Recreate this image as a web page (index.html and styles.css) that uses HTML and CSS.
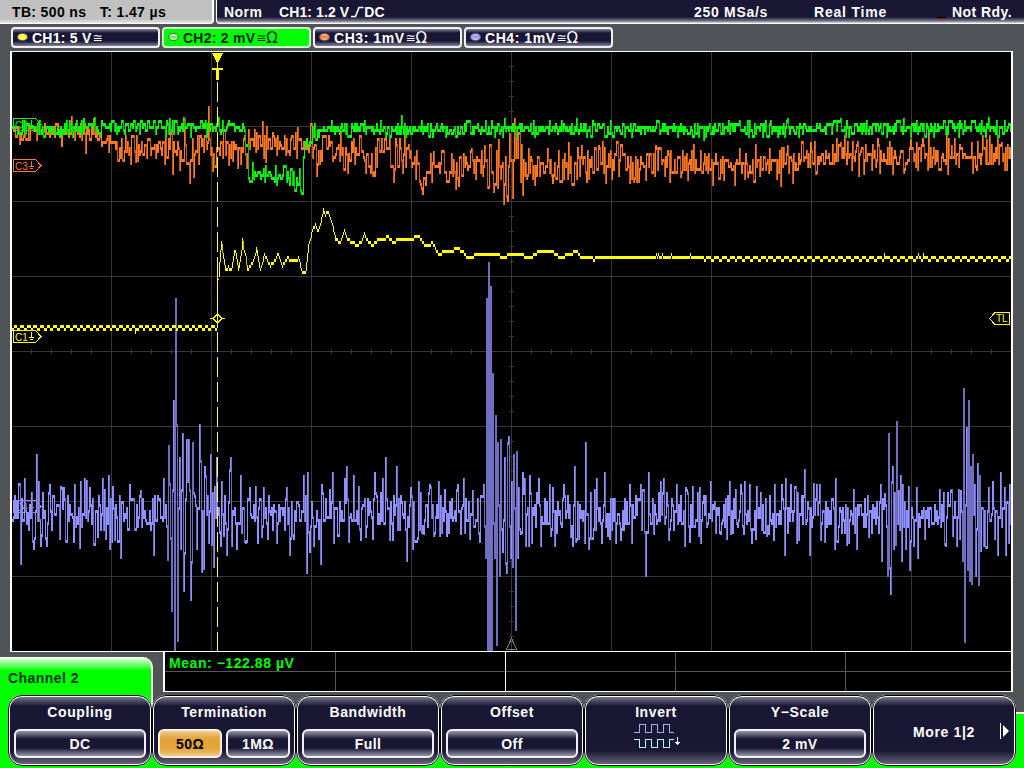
FILE: index.html
```
<!DOCTYPE html>
<html lang="en">
<head>
    <meta charset="utf-8">
    <title>Oscilloscope</title>
    <link rel="stylesheet" href="styles.css">
</head>
<body>
    <header class="topbar">
        <div class="timebase"><span class="tb">TB: 500 ns</span><span class="tpos">T: 1.47 µs</span></div>
        <div class="status">
            <span class="mode">Norm</span>
            <span class="trig">CH1: 1.2 V<svg class="edge" width="13" height="12" viewBox="0 0 13 12"><path d="M0 10.5H4.5L8 1.5H12.5"/></svg>DC</span>
            <span class="rate">250 MSa/s</span>
            <span class="acq">Real Time</span>
            <i class="lamp"></i>
            <span class="ready">Not Rdy.</span>
        </div>
    </header>

    <nav class="channels">
        <div class="channel ch1"><i class="led"></i><span class="name">CH1: 5 V</span><span class="sym">≅</span></div>
        <div class="channel ch2 active"><i class="led"></i><span class="name">CH2: 2 mV</span><span class="sym">≅</span><span class="sym ohm">Ω</span></div>
        <div class="channel ch3"><i class="led"></i><span class="name wide">CH3: 1mV</span><span class="sym">≅</span><span class="sym ohm">Ω</span></div>
        <div class="channel ch4"><i class="led"></i><span class="name wide">CH4: 1mV</span><span class="sym">≅</span><span class="sym ohm">Ω</span></div>
    </nav>

    <main class="scope">
        <svg width="999" height="599" viewBox="12 52 999 599" shape-rendering="crispEdges">
            <path id="grid" class="grid"/>
            <g class="label c4"><path d="M13.5 500.5H35.5L41 506.5L35.5 512.5H13.5Z"/><text x="15" y="510.5">C4</text><path d="M31.5 502V507M29 507.5H34M30 510.5H33"/></g>
            <g class="label c2"><path d="M13.5 118.5H35.5L41 124.5L35.5 130.5H13.5Z"/><text x="15" y="128.5">C2</text><path d="M31.5 120V125M29 125.5H34M30 128.5H33"/></g>
            <g class="label c3"><path d="M13.5 159.5H35.5L41 165.5L35.5 171.5H13.5Z"/><text x="15" y="169.5">C3</text><path d="M31.5 161V166M29 166.5H34M30 168.5H33"/></g>
            <g class="label c1"><path d="M13.5 330.5H35.5L41 336.5L35.5 342.5H13.5Z"/><text x="15" y="340.5">C1</text><path d="M31.5 332V337M29 337.5H34M30 339.5H33"/></g>
            <path id="ch4" class="wave w4"/><path id="ch4dim" class="wave w4 dim"/>
            <path id="ch1" class="wave w1"/><path id="ch1dim" class="wave w1 dim"/>
            <path id="ch3" class="wave w3"/><path id="ch3dim" class="wave w3 dim"/>
            <path id="ch2" class="wave w2"/><path id="ch2dim" class="wave w2 dim"/>
            <!-- trigger position and level -->
            <path class="trigline" d="M217.5 82V651"/>
            <path class="trigfill" d="M212 53H223L218 63V68H223V70H219V80H216V70H212V68H217V63Z"/>
            <path class="trigmark" d="M210 318.5H213L217.5 314L222 318.5L217.5 323L213 318.5M222 318.5H225"/>
            <g class="label c1"><path d="M989.5 318.5L995 312.5H1009.5V324.5H995Z"/><text x="996" y="322">TL</text></g>
            <path class="ref" d="M511.5 638L506.5 649.5H516.5Z"/>
        </svg>
    </main>

    <section class="bottom">
        <div class="tab">Channel 2</div>
        <div class="measure">
            <div class="cell first">Mean: −122.88 µV</div><div class="cell mid"></div><div class="cell"></div><div class="cell"></div><div class="cell last"></div>
            <div class="cell low"></div><div class="cell low mid"></div><div class="cell low"></div><div class="cell low"></div><div class="cell low last"></div>
        </div>
    </section>

    <footer class="softkeys">
        <div class="key"><h2>Coupling</h2><div class="row"><b>DC</b></div></div>
        <div class="key"><h2>Termination</h2><div class="row"><b class="on">50Ω</b><b>1MΩ</b></div></div>
        <div class="key"><h2>Bandwidth</h2><div class="row"><b>Full</b></div></div>
        <div class="key"><h2>Offset</h2><div class="row"><b>Off</b></div></div>
        <div class="key"><h2>Invert</h2>
            <svg class="invert" width="48" height="26" viewBox="0 0 48 26" shape-rendering="crispEdges">
                <path class="in" d="M2 9.5H7.5V1.5H13.5V9.5H19.5V1.5H25.5V9.5H31.5V1.5H37.5V9.5H42"/>
                <path class="out" d="M2 16.5H7.5V24.5H13.5V16.5H19.5V24.5H25.5V16.5H31.5V24.5H37.5V16.5H42"/>
                <path class="arrow" d="M45.5 14V22M43 19.5H48M44 20.5H47"/>
            </svg>
        </div>
        <div class="key"><h2>Y−Scale</h2><div class="row"><b>2 mV</b></div></div>
        <div class="key more"><span>More 1|2</span><svg width="9" height="16" viewBox="0 0 9 16"><path d="M0 0H1V16H0ZM3 2L9 8L3 14Z"/></svg></div>
    </footer>
    <script src="traces.js"></script>
</body>
</html>
```

FILE: styles.css
```
* {
    box-sizing: border-box;
}
body {
    margin: 0;
    width: 1024px;
    height: 768px;
    overflow: hidden;
    background: #515457;
    color: #fff;
    font: bold 14px/16px "Liberation Sans", Arial, sans-serif;
    letter-spacing: 0.45px;
    white-space: nowrap;
}

/* top bar */
.topbar {
    display: flex;
    gap: 2px;
    height: 24px;
}
.timebase {
    width: 214px;
    height: 24px;
    padding: 4px 0 0 12px;
    display: flex;
    color: #000;
    background: linear-gradient(#c0c0c0 19px, #e8e8e8);
    border-bottom: 1px solid #fff;
    border-right: 2px solid #fff;
    border-bottom-right-radius: 4px;
}
.tb {
    width: 88px;
}
.timebase span {
    letter-spacing: 0.35px;
}
.status {
    flex: 1;
    display: flex;
    padding-top: 4px;
    background: linear-gradient(#1a1735 17px, #77748a 21px, #e0e0e8 23px);
    border-left: 1px solid #fff;
    border-bottom: 1px solid #fff;
    border-bottom-left-radius: 4px;
}
.mode {
    width: 55px;
    margin-left: 7px;
}
.trig {
    width: 415px;
    letter-spacing: 0.1px;
}
.edge {
    margin: 0 0 -1px 2px;
    fill: none;
    stroke: #fff;
    stroke-width: 1.6;
}
.rate {
    width: 120px;
    letter-spacing: 0.7px;
}
.acq {
    width: 123px;
    letter-spacing: 0.8px;
}
.lamp {
    width: 9px;
    height: 2px;
    margin: 13px 6px 0 0;
    background: #b00000;
    border-top: 1px solid #000;
}

/* channel tabs */
.channels {
    display: flex;
    gap: 2px;
    padding: 3px 0 0 11px;
    height: 27px;
}
.channel {
    width: 149px;
    height: 21px;
    padding-left: 4px;
    display: flex;
    align-items: center;
    border: 2px solid #f0f0f4;
    border-radius: 4px;
    background: linear-gradient(#85839a, #1a1735 4px, #1a1735 12px, #85839a);
}
.channel.active {
    color: #002000;
    background: #00ff00;
    border-color: #d0ffd0;
}
.led {
    width: 11px;
    height: 8px;
    margin: -1px 4px 0 0;
    border: 1px solid #666;
    border-radius: 50%;
}
.ch1 .led { background: linear-gradient(#ffffa0, #ffff00 50%, #ffffa0); }
.ch2 .led { background: linear-gradient(#e0ffe0, #60e060 50%, #d0ffd0); }
.ch3 .led { background: linear-gradient(#ffc8a0, #ff7820 50%, #ffc8a0); }
.ch4 .led { background: linear-gradient(#c8c8ff, #9090ff 50%, #d0d0ff); }
.name {
    letter-spacing: 0.25px;
}
.name.wide {
    letter-spacing: 0.55px;
}
.sym {
    font: 12px/14px "DejaVu Sans", sans-serif;
    letter-spacing: 0;
    margin-left: 1px;
}
.sym.ohm {
    font-size: 15px;
    margin-left: 0;
}

/* graticule */
.scope {
    width: 1003px;
    height: 601px;
    margin-left: 10px;
    background: #000;
    border: solid #fff;
    border-width: 1px 2px;
}
.scope svg {
    display: block;
}
.grid {
    fill: #383838;
}
.label path {
    fill: none;
    stroke: currentColor;
}
.label text {
    font: 10px "Liberation Sans", sans-serif;
    letter-spacing: 0;
    fill: currentColor;
}
.c1 { color: #ffff00; }
.c2 { color: #00ff00; }
.c3 { color: #ff7820; }
.c4 { color: #8f8fff; }
.w1 { fill: #ffff00; }
.w2 { fill: #00ff00; }
.w3 { fill: #ff7820; }
.w4 { fill: #9090ff; }
.w1.dim { fill: #c4c400; }
.w2.dim { fill: #00c800; }
.w3.dim { fill: #c05a18; }
.w4.dim { fill: #706ec0; }
.trigline {
    stroke: #ffff3c;
    stroke-dasharray: 20 5;
}
.trigfill {
    fill: #ffff00;
}
.trigmark {
    fill: none;
    stroke: #ffff00;
}
.ref {
    fill: none;
    stroke: #808080;
}

/* measurement strip */
.bottom {
    display: flex;
    height: 43px;
}
.tab {
    width: 153px;
    height: 111px;
    margin-top: 5px;
    padding: 13px 0 0 8px;
    flex: none;
    color: #003000;
    background: linear-gradient(#fff, #b0ffb0 4px, #00ff00 14px);
    border-right: 2px solid #e8ffe8;
    border-top-right-radius: 10px;
}
.measure {
    width: 850px;
    height: 40px;
    margin-left: 10px;
    display: grid;
    grid-template-columns: 171px 170px 170px 170px 1fr;
    grid-template-rows: 20px 19px;
    background: #000;
    border: solid #fff;
    border-width: 0 2px 1px;
    color: #00ff00;
    letter-spacing: 0.55px;
}
.cell {
    border-right: 1px solid #555;
    border-bottom: 1px solid #555;
}
.cell.first {
    padding: 3px 0 0 4px;
}
.cell.mid {
    border-right-color: #555;
}
.cell.mid:nth-child(5n + 2) {
    border-right-color: #fff;
}
.cell.last {
    border-right: 0;
}
.cell.low {
    border-bottom: 0;
}

/* soft keys */
.softkeys {
    position: relative;
    display: flex;
    height: 73px;
    padding-left: 8px;
    background: linear-gradient(90deg, #00ff00 8px, transparent 8px, transparent 1015px, #00ff00 1015px) 0 18px no-repeat, linear-gradient(#00ff00, #00ff00) 0 60px no-repeat;
}
.softkeys::after {
    content: "";
    width: 8px;
    height: 2px;
    margin-top: 17px;
    background: #fff;
}
.key {
    width: 144px;
    height: 71px;
    flex: none;
    display: flex;
    flex-direction: column;
    align-items: center;
    border: 2px solid #fff;
    outline: 1px solid #000;
    outline-offset: -1px;
    border-radius: 14px;
    background: linear-gradient(#77758a, #1a1735 9px, #1a1735 54px, #66647a);
}
.key h2 {
    margin: 7px 0 9px;
    font: inherit;
    letter-spacing: 0.6px;
}
.row {
    display: flex;
    gap: 4px;
    width: 132px;
}
.row b {
    flex: 1;
    height: 29px;
    padding-top: 5px;
    text-align: center;
    border: 2px solid #f0f0f4;
    border-radius: 6px;
    background: linear-gradient(#9896a8, #1a1735 8px, #1a1735 17px, #9896a8);
}
.row b.on {
    color: #000;
    border-color: #fff0e0;
    background: linear-gradient(#f0cc90, #e5a53b 7px, #e5a53b 18px, #f0cc90);
}
.invert {
    margin-top: -6px;
    fill: none;
}
.invert .in { stroke: #9cb4e8; }
.invert .out { stroke: #b4f4ff; }
.invert .arrow { stroke: #fff; }
.key.more {
    flex-direction: row;
    justify-content: flex-end;
    padding-right: 5px;
}
.more span {
    margin: 2px 25px 0 0;
    letter-spacing: 0.65px;
}
.more svg {
    fill: #fff;
}
```

FILE: traces.js
```
const LEFT = 12, RIGHT = 1011;

let seed = 4711;
function rnd() {
    seed = (seed * 1103515245 + 12345) & 0x7fffffff;
    return (seed >> 8) / 0x7fffff;
}

// linear interpolation in a list of x,y,x,y...
function curve(p, x) {
    for (let i = 2; i < p.length; i += 2) {
        if (x <= p[i]) {
            const t = (x - p[i - 2]) / (p[i] - p[i - 2]);
            return p[i - 1] + t * (p[i + 1] - p[i - 1]);
        }
    }
    return p[p.length - 1];
}

// one bar per column, from the previous sample to this one
function plot(id, y, limit, thin) {
    let bright = '', dim = '';
    for (let x = LEFT; x < RIGHT; x++) {
        const a = y[x - 1] === undefined ? y[x] : y[x - 1];
        let top = Math.min(a, y[x]), h = Math.abs(a - y[x]) + 3;
        if (thin && h > 3) {
            h -= 3;
            if (y[x] > a) top += 3;
        }
        const bar = `M${x} ${top}h1v${h}h-1z`;
        if (h > 110 || (h > limit && y[x] > a)) dim += bar;
        else bright += bar;
    }
    document.getElementById(id).setAttribute('d', bright);
    document.getElementById(id + 'dim').setAttribute('d', dim);
}

// hold = chance that a column repeats the last sample
function noisy(center, amp, hold, spikes) {
    const y = [];
    let side = 1;
    for (let x = LEFT; x < RIGHT; x++) {
        if (x > LEFT && rnd() < hold) {
            y[x] = y[x - 1];
            continue;
        }
        const c = curve(center, x), a = curve(amp, x);
        if (rnd() < 0.8) side = -side;
        y[x] = Math.round((c + side * Math.abs(rnd() + rnd() - 1) * a) / 3) * 3;
    }
    for (let i = 0; i < spikes.length; i += 2) {
        // bars are 3px high, so downward spikes stop short
        const c = curve(center, spikes[i]);
        y[spikes[i]] = spikes[i + 1] > c ? spikes[i + 1] - 3 : spikes[i + 1];
    }
    return y;
}

// graticule
let g = '';
for (let x = 111; x < 1000; x += 100) g += `M${x} 52h1v599h-1z`;
for (let y = 126; y < 600; y += 75) g += `M12 ${y}h999v1h-999z`;
for (let x = 31; x < 1011; x += 20) g += `M${x} 349h1v5h-1z`;
for (let y = 66; y < 650; y += 15) g += `M509 ${y}h5v1h-5z`;
document.getElementById('grid').setAttribute('d', g);

// CH1
const step = [218,278,219,262,221,240,222,250,225,269,228,266,231,268,234,250,235,249,238,269,
    241,250,242,237,243,246,245,252,247,269,252,262,254,256,256,247,260,269,264,252,267,260,
    270,264,274,260,278,252,282,265,287,257,295,259,298,257,302,270,305,272,308,245,312,228,
    315,223,318,230,320,222,323,208,325,213,328,211,332,223,335,237,340,242,344,229,347,237,
    352,242,358,243,361,240,364,232,366,238,372,244,378,238,388,236,392,240,398,239,404,238,
    411,238,418,234,425,244,432,242,438,252,450,250,456,247,463,250,466,256,480,253,498,252,
    501,257,508,254,520,253,530,257,538,250,552,250,559,256,566,254,577,250,581,256,592,255,
    593,259,595,256,1011,256];
const y1 = [];
for (let x = LEFT; x < RIGHT; x++) {
    if (x < 217) y1[x] = (x + (x >> 4)) % 7 < 4 ? 325 : 328;
    else if (x === 217) y1[x] = 276;
    else if (x < 640) y1[x] = Math.round((curve(step, x) - 1) / 3) * 3 + 1;
    else y1[x] = (x > 700 && (x + (x >> 5)) % 8 > 4) ? 259 : 256;
}
y1[135] = 331;
for (const x of [656, 658, 662, 671, 690, 884, 918, 923]) y1[x] = 253;
plot('ch1', y1, 7, true);

// CH2
plot('ch2', noisy(
    [12,127,243,126,246,145,248,178,252,173,260,173,270,174,286,175,291,181,301,181,304,145,307,138,314,132,320,128,1011,127],
    [12,10,243,10,250,13,300,13,320,10,1011,10], 0.25,
    [83,118,169,118,190,138,250,183,294,192,300,192,401,115,405,138,504,118,576,118,
     787,118,777,138,840,118,848,138,903,118,910,138,998,138]
), 9);

// CH3
plot('ch3', noisy(
    [12,132,36,128,60,133,80,128,100,135,112,138,118,150,172,145,180,153,200,143,215,150,230,140,
     240,150,255,140,300,144,312,141,317,160,325,140,345,153,360,143,372,168,380,146,395,152,408,147,
     420,183,430,163,455,170,465,158,485,168,500,170,511,160,520,163,535,166,560,165,600,158,640,163,
     680,158,720,165,760,165,790,158,820,155,850,154,880,157,920,152,960,156,1011,153],
    [12,12,100,12,120,20,480,20,493,40,518,40,525,22,1011,22], 0.22,
    [19,145,61,147,71,116,85,154,93,118,117,162,135,163,172,175,184,118,189,184,193,178,208,106,
     212,172,228,166,237,169,246,169,262,121,265,163,297,127,317,166,332,162,340,130,373,174,393,183,
     402,174,416,150,421,190,433,151,455,190,458,187,471,148,484,145,493,193,498,139,503,205,507,202,
     509,133,512,199,514,118,516,130,522,196,528,148,547,148,552,184,568,142,581,145,586,183,598,145,
     605,184,629,184,645,181,655,145,680,178,687,181,723,181,739,148,747,178,769,148,780,187,787,145,
     792,184,810,142,815,175,840,142,863,175,877,138,892,175,910,139,916,142,947,175,951,145,971,142,
     986,139,1001,142]
), 12);

// CH4
plot('ch4', noisy(
    [12,513,1011,513],
    [12,34,165,34,170,44,215,44,235,32,484,32,490,44,520,44,530,32,880,32,890,38,910,32,960,34,980,38,1011,36], 0.14,
    [20,565,24,478,33,550,36,454,38,481,40,547,46,547,49,484,61,487,63,487,73,543,74,484,80,481,84,478,
     89,487,97,538,102,478,108,475,109,550,114,541,120,559,129,484,140,490,153,556,163,478,168,445,
     167,561,171,612,173,400,174,651,175,298,176,424,177,642,179,457,180,550,182,433,183,592,186,439,
     188,439,190,601,192,442,191,564,196,550,199,424,200,460,201,573,203,570,204,466,205,475,208,544,
     210,454,213,568,216,457,220,547,221,481,226,556,229,469,230,457,231,547,236,550,240,475,245,544,
     249,487,257,544,261,538,263,487,276,544,286,487,289,556,303,475,306,574,307,472,309,553,313,547,
     320,565,321,484,332,472,333,544,344,478,346,466,348,543,353,475,360,541,365,538,374,472,382,478,
     385,457,389,541,392,541,396,466,406,562,410,487,412,550,418,481,423,535,429,484,438,481,434,535,
     457,484,463,478,460,535,472,490,478,535,483,484,485,559,486,298,487,651,488,262,489,651,490,286,
     491,651,492,373,494,559,495,415,496,646,497,442,499,577,500,439,502,553,504,457,505,565,507,442,
     508,436,506,574,510,559,511,481,512,568,513,454,515,631,516,451,517,559,518,487,520,535,522,472,
     524,478,525,547,528,547,529,475,531,544,538,478,540,547,549,484,552,487,554,547,563,484,570,538,
     572,547,574,466,576,541,585,442,584,544,588,550,596,478,604,472,601,544,615,544,620,541,629,484,
     631,544,640,484,645,577,648,472,653,535,660,481,663,478,668,541,676,484,684,547,685,487,699,487,
     700,544,710,481,720,535,729,481,730,535,740,484,744,481,743,535,749,484,751,544,768,535,774,484,
     773,541,781,484,784,556,785,478,790,484,796,544,798,541,804,469,809,556,816,484,819,484,820,541,
     834,550,835,478,848,544,856,550,868,538,880,484,881,562,884,493,887,577,888,433,889,570,890,595,
     891,481,892,466,893,550,896,421,895,546,898,490,900,475,901,562,902,484,905,550,909,571,913,547,
     916,487,917,559,945,547,950,490,956,547,960,490,962,562,963,388,964,643,966,427,967,571,968,400,
     969,582,970,466,971,585,972,454,974,484,975,577,977,463,978,586,979,475,983,547,988,487,992,481,
     997,556,1000,472,1004,487,1005,556,1008,544,1009,484]
), 30);
```
